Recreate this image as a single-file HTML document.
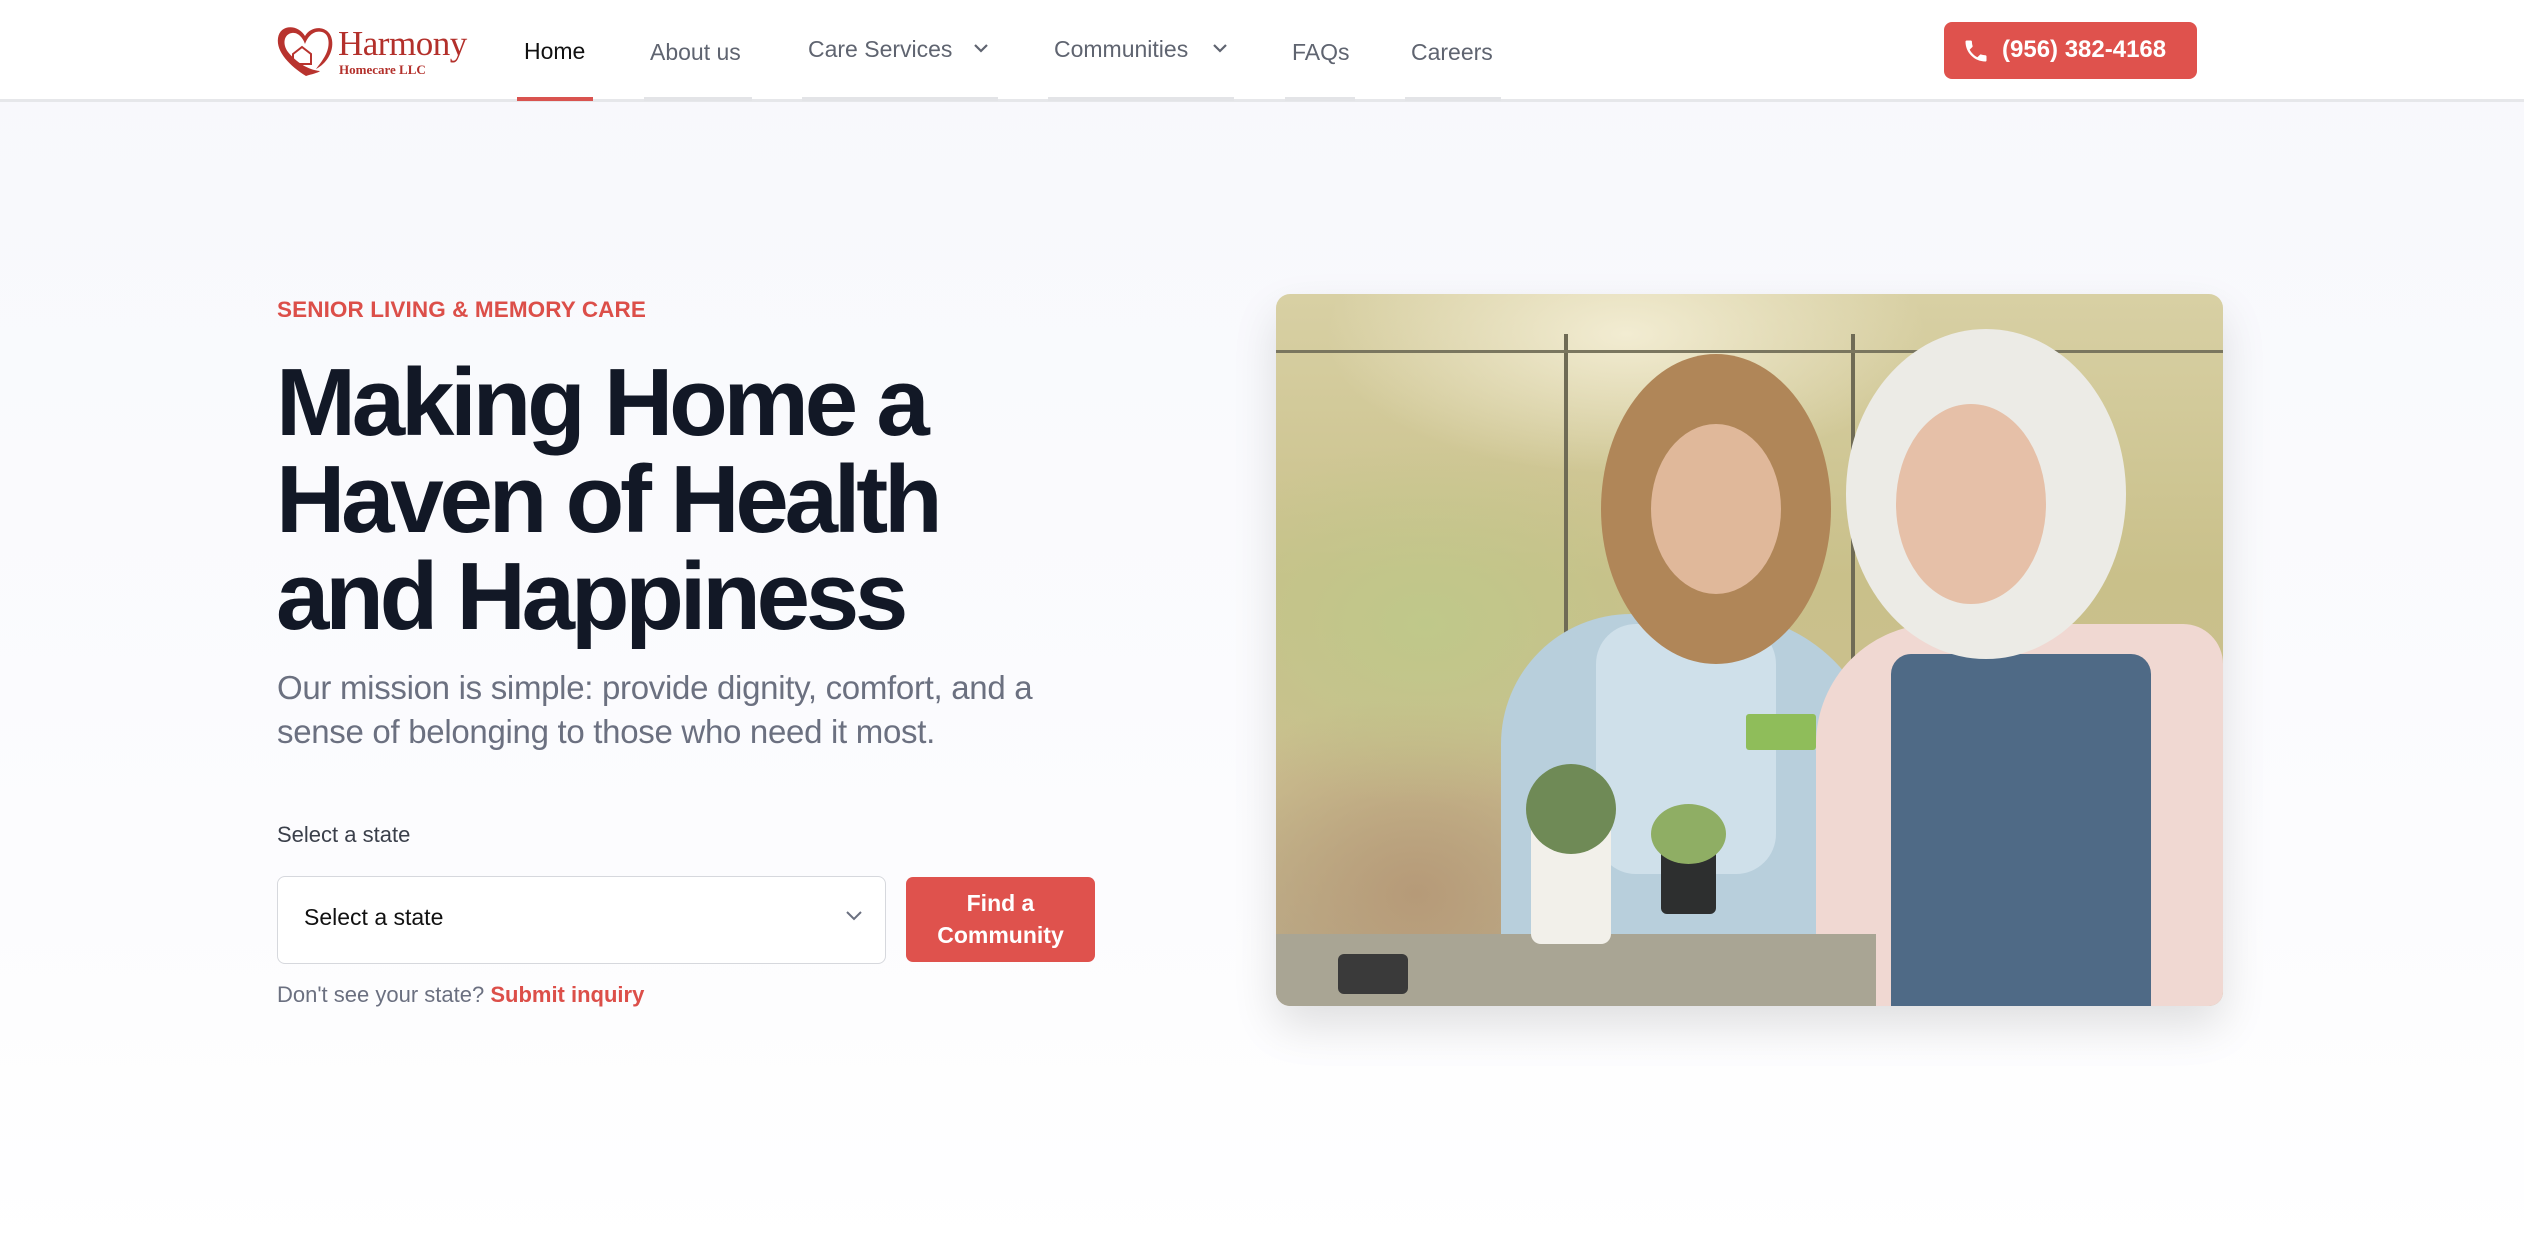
<!DOCTYPE html>
<html><head><meta charset="utf-8"><style>
*{margin:0;padding:0;box-sizing:border-box}
body{width:2524px;height:1258px;overflow:hidden;font-family:"Liberation Sans",sans-serif;background:linear-gradient(#f7f8fc,#fcfcfe 70%,#fff);position:relative}
.a{position:absolute;white-space:nowrap}
header{position:absolute;left:0;top:0;width:2524px;height:102px;background:#fff;border-bottom:3px solid #e6e7ea}
.nav{font-size:23px;color:#5f6470;top:38px}
.ul{position:absolute;top:97px;height:4px;background:#e3e4e7}
.chev{position:absolute;top:42px}
</style></head><body>
<header>
<svg class="a" style="left:276px;top:24px" width="58" height="54" viewBox="0 0 58 54">
<path d="M29 12 C22 0 4 0 2 14 C0 28 14 42 30 52 C36 50 42 49 44 47 C32 46 20 38 12 28 C6 20 8 10 16 9 C22 8 27 14 29 20 C32 12 38 6 46 8 C54 10 54 22 50 30 C46 38 42 42 40 45 C50 40 58 28 56 16 C54 2 36 0 29 12Z" fill="#b8332e"/>
<path d="M17 30 L26 23 L35 30 L35 40 L17 40Z" fill="none" stroke="#b8332e" stroke-width="2"/>
</svg>
<div class="a" style="left:338px;top:24px;font-family:'Liberation Serif',serif;font-size:35px;color:#b3302b;letter-spacing:-0.5px">Harmony</div>
<div class="a" style="left:339px;top:62px;font-family:'Liberation Serif',serif;font-size:13px;font-weight:bold;color:#b3302b">Homecare LLC</div>
<div class="a nav" style="left:524px;color:#111">Home</div>
<div class="ul" style="left:517px;width:76px;background:#d9534f"></div>
<div class="a nav" style="left:650px;top:39px">About us</div>
<div class="ul" style="left:644px;width:108px"></div>
<div class="a nav" style="left:808px;top:36px">Care Services</div>
<svg class="chev" style="left:972px" width="18" height="12"><path d="M3 3 L9 9 L15 3" fill="none" stroke="#5f6470" stroke-width="2.2"/></svg>
<div class="ul" style="left:802px;width:196px"></div>
<div class="a nav" style="left:1054px;top:36px">Communities</div>
<svg class="chev" style="left:1211px" width="18" height="12"><path d="M3 3 L9 9 L15 3" fill="none" stroke="#5f6470" stroke-width="2.2"/></svg>
<div class="ul" style="left:1048px;width:186px"></div>
<div class="a nav" style="left:1292px;top:39px">FAQs</div>
<div class="ul" style="left:1285px;width:70px"></div>
<div class="a nav" style="left:1411px;top:39px">Careers</div>
<div class="ul" style="left:1405px;width:96px"></div>
<div class="a" style="left:1944px;top:22px;width:253px;height:57px;background:#df524d;border-radius:8px"></div>
<svg class="a" style="left:1962px;top:37px" width="28" height="28" viewBox="0 0 24 24"><path d="M6.6 10.8c1.4 2.8 3.8 5.1 6.6 6.6l2.2-2.2c.3-.3.7-.4 1-.2 1.1.4 2.3.6 3.6.6.6 0 1 .4 1 1V20c0 .6-.4 1-1 1C10.6 21 3 13.4 3 4c0-.6.4-1 1-1h3.5c.6 0 1 .4 1 1 0 1.3.2 2.5.6 3.6.1.3 0 .7-.2 1z" fill="#fff"/></svg>
<div class="a" style="left:2002px;top:36px;font-size:24px;font-weight:bold;color:#fff">(956) 382-4168</div>
</header>

<div class="a" style="left:277px;top:297px;font-size:22.5px;font-weight:bold;color:#dc4f49;letter-spacing:0.1px">SENIOR LIVING &amp; MEMORY CARE</div>
<div class="a" style="left:276px;top:354px;font-size:96px;font-weight:bold;color:#121826;letter-spacing:-4.2px;line-height:97px">Making Home a<br>Haven of Health<br>and Happiness</div>
<div class="a" style="left:277px;top:666px;font-size:33px;color:#6b7080;line-height:44px;letter-spacing:-0.3px">Our mission is simple: provide dignity, comfort, and a<br>sense of belonging to those who need it most.</div>
<div class="a" style="left:277px;top:822px;font-size:22px;color:#3a3f4a">Select a state</div>
<div class="a" style="left:277px;top:876px;width:609px;height:88px;background:#fff;border:1.5px solid #d6d8dd;border-radius:8px"></div>
<div class="a" style="left:304px;top:904px;font-size:23px;color:#111">Select a state</div>
<svg class="a" style="left:845px;top:910px" width="18" height="12"><path d="M2 2 L9 9 L16 2" fill="none" stroke="#6b7080" stroke-width="2"/></svg>
<div class="a" style="left:906px;top:877px;width:189px;height:85px;background:#df524d;border-radius:7px;color:#fff;font-size:23px;font-weight:bold;text-align:center;line-height:32px;padding-top:10px;white-space:normal">Find a<br>Community</div>
<div class="a" style="left:277px;top:982px;font-size:22px;color:#6b7080">Don't see your state? <b style="color:#dc4f49">Submit inquiry</b></div>

<div class="a" style="left:1276px;top:294px;width:947px;height:712px;border-radius:14px;overflow:hidden;box-shadow:0 20px 45px rgba(0,0,0,0.12);background:linear-gradient(180deg,#d8d0a4 0%,#c9c08a 40%,#cbbf90 70%,#b7a98a 100%)">
<div class="a" style="left:0;top:0;width:947px;height:712px;background:radial-gradient(ellipse 260px 180px at 150px 330px,#bfc88a,transparent),radial-gradient(ellipse 240px 200px at 140px 600px,#b69a78,transparent),radial-gradient(ellipse 300px 140px at 350px 40px,#f2ecd2,transparent)"></div>
<div class="a" style="left:288px;top:40px;width:4px;height:330px;background:#6f6b55"></div>
<div class="a" style="left:575px;top:40px;width:4px;height:330px;background:#6f6b55"></div>
<div class="a" style="left:0;top:56px;width:947px;height:3px;background:#7a765f"></div>
<div class="a" style="left:225px;top:320px;width:380px;height:392px;background:#b8cfdc;border-radius:130px 160px 20px 20px"></div>
<div class="a" style="left:320px;top:330px;width:180px;height:250px;background:#cfe0ea;border-radius:40px"></div>
<div class="a" style="left:325px;top:60px;width:230px;height:310px;background:#b08658;border-radius:50%"></div>
<div class="a" style="left:375px;top:130px;width:130px;height:170px;background:#e0b89a;border-radius:50%"></div>
<div class="a" style="left:540px;top:330px;width:407px;height:382px;background:#f0d8d2;border-radius:120px 40px 0 0"></div>
<div class="a" style="left:615px;top:360px;width:260px;height:352px;background:#4f6a86;border-radius:20px 20px 0 0"></div>
<div class="a" style="left:570px;top:35px;width:280px;height:330px;background:#ecebe6;border-radius:50%"></div>
<div class="a" style="left:620px;top:110px;width:150px;height:200px;background:#e6c0a8;border-radius:50%"></div>
<div class="a" style="left:0;top:640px;width:600px;height:72px;background:#a9a594"></div>
<div class="a" style="left:255px;top:520px;width:80px;height:130px;background:#f2f0ea;border-radius:10px"></div>
<div class="a" style="left:250px;top:470px;width:90px;height:90px;background:#6f8a56;border-radius:50%"></div>
<div class="a" style="left:385px;top:545px;width:55px;height:75px;background:#2d2f2f;border-radius:6px"></div>
<div class="a" style="left:375px;top:510px;width:75px;height:60px;background:#8fae64;border-radius:50%"></div>
<div class="a" style="left:62px;top:660px;width:70px;height:40px;background:#3a3a3a;border-radius:6px"></div>
<div class="a" style="left:470px;top:420px;width:70px;height:36px;background:#8fbd5a;border-radius:3px"></div>
</div>
</body></html>
